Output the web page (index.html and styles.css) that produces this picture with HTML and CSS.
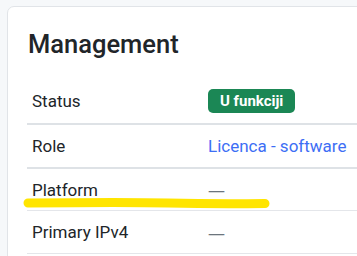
FILE: index.html
```html
<!DOCTYPE html>
<html>
<head>
<meta charset="utf-8">
<link rel="stylesheet" href="styles.css">
</head>
<body>
<div class="page">
  <div class="card">
    <h2 class="card-title">Management</h2>
    <table class="attrs">
      <tr class="row strong first">
        <th>Status</th>
        <td><span class="badge">U funkciji</span></td>
      </tr>
      <tr class="row strong">
        <th>Role</th>
        <td><a class="link" href="#">Licenca - software</a></td>
      </tr>
      <tr class="row short">
        <th>Platform</th>
        <td><span class="muted">—</span></td>
      </tr>
      <tr class="row">
        <th>Primary IPv4</th>
        <td><span class="muted">—</span></td>
      </tr>
    </table>
  </div>
  <svg class="highlight" width="260" height="16" viewBox="0 0 260 16">
    <path d="M10 8 C 60 7.5, 110 7, 150 8 C 190 9, 225 8.8, 247 8.5" stroke="#ffe500" stroke-width="9" stroke-linecap="round" fill="none"/>
  </svg>
</div>
</body>
</html>
```
FILE: styles.css
```css
html, body {
  margin: 0;
  padding: 0;
  background: #f6f8fa;
  overflow: hidden;
}
.page {
  position: relative;
  width: 357px;
  height: 256px;
  padding: 6px 0 0 7px;
  box-sizing: border-box;
  font-family: Roboto, "Noto Sans", sans-serif;
  color: #1f2328;
  overflow: hidden;
}
.card {
  width: 420px;
  background: #fff;
  border: 1px solid #e1e4e8;
  border-radius: 7px;
  padding: 22px 0 0 19px;
  box-sizing: border-box;
  height: 300px;
}
.card-title {
  margin: 0;
  font-size: 25.5px;
  font-weight: 500;
  line-height: 30px;
  color: #212529;
  padding-left: 1px;
}
.attrs {
  margin-top: 20px;
  border-collapse: collapse;
  width: 380px;
  font-size: 17px;
}
.row th, .row td {
  height: 42px;
  padding: 0 0 0 5px;
  text-align: left;
  font-weight: 400;
  vertical-align: middle;
  border-bottom: 1px solid #e4e6ea;
}
.row.strong th, .row.strong td {
  border-bottom: 2px solid #dee2e6;
  height: 42px;
}
.row.first th, .row.first td {
  height: 44px;
}
.row.short th, .row.short td {
  height: 41px;
}
.row th {
  width: 171px;
  color: #212529;
}
.badge {
  display: inline-block;
  background: #1b8755;
  color: #fff;
  font-weight: 700;
  font-size: 15px;
  line-height: 24px;
  padding: 0 12px;
  border-radius: 5px;
}
.link {
  color: #3d6ef5;
  text-decoration: none;
}
.muted {
  color: #6c757d;
  font-family: "Noto Sans", sans-serif;
}
.highlight {
  position: absolute;
  left: 18px;
  top: 195px;
}
```
